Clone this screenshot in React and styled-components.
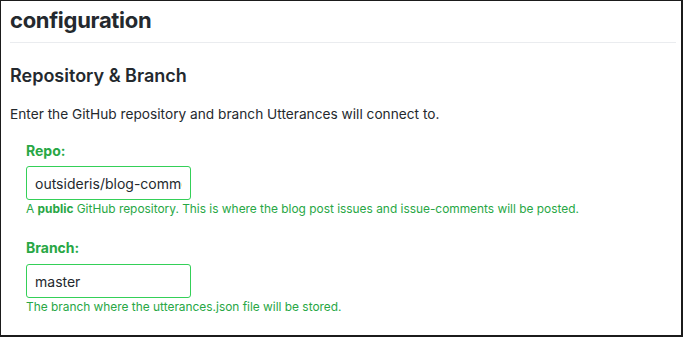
import React from "react"
import styled, { createGlobalStyle } from "styled-components"

const GlobalStyle = createGlobalStyle`
  html, body {
    margin: 0;
    padding: 0;
    background: #fff;
  }
  body {
    font-family: Inter, "Liberation Sans", Arial, sans-serif;
    color: #24292e;
  }
`

const Frame = styled.div`
  box-sizing: border-box;
  width: 683px;
  height: 337px;
  overflow: hidden;
  border: 1px solid #1b1b1b;
  border-right-width: 2px;
  border-bottom-width: 2px;
  padding: 0 5px 0 9px;
  display: flex;
  flex-direction: column;
`

const PageTitle = styled.h1`
  margin: 0;
  padding: 5px 0 8px;
  font-size: 22px;
  line-height: 28px;
  font-weight: 700;
  letter-spacing: -0.3px;
  border-bottom: 1px solid #eaecef;
`

const SectionTitle = styled.h2`
  margin: 21px 0 0;
  font-size: 18px;
  line-height: 24px;
  font-weight: 600;
`

const Intro = styled.p`
  margin: 16px 0 0;
  font-size: 13.7px;
  line-height: 20px;
`

const Field = styled.div`
  display: flex;
  flex-direction: column;
  align-items: flex-start;
  margin: ${({ first }) => (first ? "17px" : "20px")} 0 0 16px;
`

const Label = styled.label`
  font-size: 14px;
  line-height: 20px;
  font-weight: 700;
  color: #28a745;
`

const Input = styled.input`
  box-sizing: border-box;
  margin-top: ${({ gap }) => gap}px;
  width: 165px;
  height: 34px;
  padding: 0 8px;
  font-family: inherit;
  font-size: 14px;
  color: #24292e;
  background: #fff;
  border: 1px solid #34d058;
  border-radius: 3px;
  outline: none;
`

const Note = styled.p`
  margin: 0;
  font-size: 11.9px;
  line-height: 18px;
  color: #28a745;

  strong {
    font-weight: 700;
  }
`

const App = () => {
  return (
    <>
      <GlobalStyle />
      <Frame>
        <PageTitle>configuration</PageTitle>
        <SectionTitle>Repository &amp; Branch</SectionTitle>
        <Intro>
          Enter the GitHub repository and branch Utterances will connect to.
        </Intro>
        <Field first>
          <Label htmlFor="repo">Repo:</Label>
          <Input id="repo" gap={5} defaultValue="outsideris/blog-comments" />
          <Note>
            A <strong>public</strong> GitHub repository. This is where the blog
            post issues and issue-comments will be posted.
          </Note>
        </Field>
        <Field>
          <Label htmlFor="branch">Branch:</Label>
          <Input id="branch" gap={6} defaultValue="master" />
          <Note>The branch where the utterances.json file will be stored.</Note>
        </Field>
      </Frame>
    </>
  )
}

export default App
